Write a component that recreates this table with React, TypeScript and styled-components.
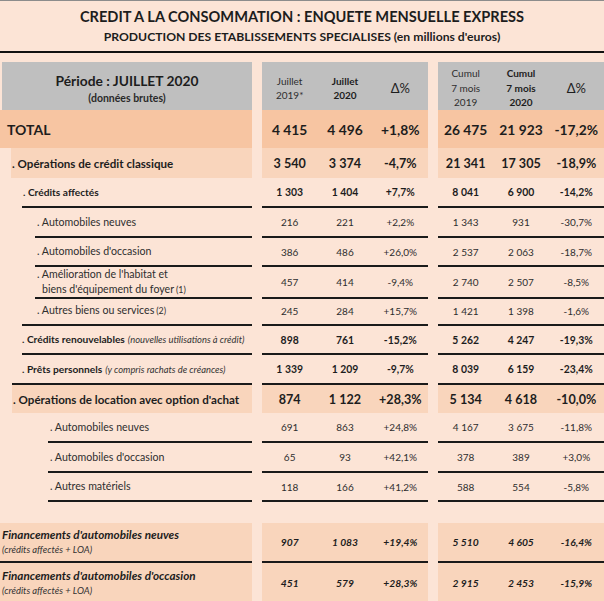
import React from "react";
import styled, { createGlobalStyle } from "styled-components";

const C = {
  bg: "#FCE4D6",
  gray: "#BFBFBF",
  total: "#F7C5A2",
  band: "#F9D5BC",
  ink: "#1d1d1d",
  soft: "#2e2e2e",
  rule: "#1a1a1a",
};

const GlobalStyle = createGlobalStyle`
  *, *::before, *::after { box-sizing: border-box; }
  html, body { margin: 0; padding: 0; background: ${C.bg}; }
  body { font-family: Lato, "Open Sans", "Liberation Sans", sans-serif; color: ${C.ink}; }
`;

type Kind = "total" | "major" | "sub" | "item" | "fin";

const labelSize: Record<Kind, number> = { total: 14, major: 11.6, sub: 10.2, item: 10.6, fin: 11.7 };
const valSize: Record<Kind, number> = { total: 13.8, major: 12.6, sub: 10.4, item: 10, fin: 10.3 };

const Page = styled.div`
  width: 604px;
  height: 601px;
  overflow: hidden;
  background: ${C.bg};
`;

const TitleBlock = styled.header`
  height: 53px;
  border-top: 1px solid #8c8c8c;
  border-bottom: 2px solid #111;
  display: flex;
  flex-direction: column;
  align-items: center;
  justify-content: center;
  gap: 2px;
  margin-bottom: 9px;
`;

const Title = styled.h1`
  margin: 0;
  font-size: 14.6px;
  line-height: 20px;
  font-weight: 700;
  color: ${C.ink};
`;

const Subtitle = styled.h2`
  margin: 0;
  font-size: 12.2px;
  line-height: 16px;
  font-weight: 700;
  color: ${C.ink};
`;

const Row = styled.div<{ $h: number }>`
  display: grid;
  grid-template-columns: 252px 166px 166px;
  column-gap: 10px;
  height: ${(p) => p.$h}px;
`;

const LabelCell = styled.div<{ $indent: number; $pad: number; $bg?: string; $top?: boolean; $bottom?: boolean }>`
  margin-left: ${(p) => p.$indent}px;
  padding-left: ${(p) => p.$pad}px;
  background: ${(p) => p.$bg ?? "transparent"};
  border-top: ${(p) => (p.$top ? `2px solid ${C.rule}` : "none")};
  border-bottom: ${(p) => (p.$bottom ? `2px solid ${C.rule}` : "none")};
  display: flex;
  flex-direction: column;
  justify-content: center;
  min-width: 0;
`;

const Group = styled.div<{ $bg?: string; $top?: boolean; $bottom?: boolean }>`
  display: grid;
  grid-template-columns: repeat(3, 1fr);
  align-items: center;
  justify-items: center;
  background: ${(p) => p.$bg ?? "transparent"};
  border-top: ${(p) => (p.$top ? `2px solid ${C.rule}` : "none")};
  border-bottom: ${(p) => (p.$bottom ? `2px solid ${C.rule}` : "none")};
`;

const Label = styled.div<{ $kind: Kind }>`
  font-size: ${(p) => labelSize[p.$kind]}px;
  font-weight: ${(p) => (p.$kind === "item" ? 400 : 700)};
  font-style: ${(p) => (p.$kind === "fin" ? "italic" : "normal")};
  color: ${(p) => (p.$kind === "item" ? C.soft : C.ink)};
  line-height: 15px;
  white-space: nowrap;
`;

const Continuation = styled.div`
  padding-left: 5px;
`;

const Note = styled.span`
  font-size: 9.4px;
  font-weight: 400;
  font-style: italic;
  color: #333;
  margin-left: 3px;
`;

const Small = styled.span`
  font-size: 8.8px;
  margin-left: 2px;
`;

const FinNote = styled.div`
  font-size: 9.4px;
  font-weight: 400;
  font-style: italic;
  color: #333;
  line-height: 15px;
`;

const Val = styled.span<{ $kind: Kind }>`
  font-size: ${(p) => valSize[p.$kind]}px;
  font-weight: ${(p) => (p.$kind === "item" ? 400 : 700)};
  font-style: ${(p) => (p.$kind === "fin" ? "italic" : "normal")};
  color: ${(p) => (p.$kind === "item" ? C.soft : C.ink)};
  white-space: nowrap;
`;

/* header */
const HeadLeft = styled.div`
  margin-left: 2px;
  background: ${C.gray};
  display: flex;
  flex-direction: column;
  align-items: center;
  justify-content: center;
  padding-top: 6px;
`;

const Periode = styled.div`
  font-size: 13.8px;
  font-weight: 700;
  line-height: 18px;
`;

const Brutes = styled.div`
  font-size: 10.5px;
  font-weight: 700;
  line-height: 16px;
  color: #2a2a2a;
`;

const HeadGroup = styled.div`
  background: ${C.gray};
  display: grid;
  grid-template-columns: repeat(3, 1fr);
  align-items: center;
  justify-items: center;
  padding-top: 4px;
`;

const HeadCol = styled.div<{ $bold?: boolean }>`
  text-align: center;
  font-size: 10px;
  line-height: 14.5px;
  font-weight: ${(p) => (p.$bold ? 700 : 400)};
  color: ${(p) => (p.$bold ? C.ink : C.soft)};
`;

const Delta = styled.div`
  font-size: 13px;
  color: ${C.ink};
`;

const Spacer = styled.div`
  height: 21px;
`;

interface RowDef {
  kind: Kind;
  label: React.ReactNode;
  values: string[];
  h: number;
  indent: number;
  pad: number;
  bg?: string;
  top?: boolean;
  bottom?: boolean;
}

const rows: RowDef[] = [
  { kind: "total", label: "TOTAL", values: ["4 415", "4 496", "+1,8%", "26 475", "21 923", "-17,2%"], h: 38, indent: 0, pad: 7, bg: C.total },
  { kind: "major", label: ". Opérations de crédit classique", values: ["3 540", "3 374", "-4,7%", "21 341", "17 305", "-18,9%"], h: 30, indent: 11, pad: 1, bg: C.band },
  { kind: "sub", label: ". Crédits affectés", values: ["1 303", "1 404", "+7,7%", "8 041", "6 900", "-14,2%"], h: 30, indent: 22, pad: 1, bottom: true },
  { kind: "item", label: ". Automobiles neuves", values: ["216", "221", "+2,2%", "1 343", "931", "-30,7%"], h: 30, indent: 35, pad: 2, bottom: true },
  { kind: "item", label: ". Automobiles d'occasion", values: ["386", "486", "+26,0%", "2 537", "2 063", "-18,7%"], h: 29, indent: 35, pad: 2, bottom: true },
  {
    kind: "item",
    label: (
      <>
        <div>. Amélioration de l'habitat et</div>
        <Continuation>
          biens d'équipement du foyer<Small>(1)</Small>
        </Continuation>
      </>
    ),
    values: ["457", "414", "-9,4%", "2 740", "2 507", "-8,5%"],
    h: 30,
    indent: 35,
    pad: 2,
    bottom: true,
  },
  {
    kind: "item",
    label: (
      <>
        . Autres biens ou services<Small>(2)</Small>
      </>
    ),
    values: ["245", "284", "+15,7%", "1 421", "1 398", "-1,6%"],
    h: 27,
    indent: 35,
    pad: 2,
  },
  {
    kind: "sub",
    label: (
      <>
        . Crédits renouvelables<Note>(nouvelles utilisations à crédit)</Note>
      </>
    ),
    values: ["898", "761", "-15,2%", "5 262", "4 247", "-19,3%"],
    h: 31,
    indent: 22,
    pad: 0,
    top: true,
    bottom: true,
  },
  {
    kind: "sub",
    label: (
      <>
        . Prêts personnels<Note>(y compris rachats de créances)</Note>
      </>
    ),
    values: ["1 339", "1 209", "-9,7%", "8 039", "6 159", "-23,4%"],
    h: 28,
    indent: 22,
    pad: 0,
  },
  { kind: "major", label: ". Opérations de location avec option d'achat", values: ["874", "1 122", "+28,3%", "5 134", "4 618", "-10,0%"], h: 30, indent: 12, pad: 1, bg: C.band, top: true },
  { kind: "item", label: ". Automobiles neuves", values: ["691", "863", "+24,8%", "4 167", "3 675", "-11,8%"], h: 30, indent: 48, pad: 2, bottom: true },
  { kind: "item", label: ". Automobiles d'occasion", values: ["65", "93", "+42,1%", "378", "389", "+3,0%"], h: 30, indent: 48, pad: 2, bottom: true },
  { kind: "item", label: ". Autres matériels", values: ["118", "166", "+41,2%", "588", "554", "-5,8%"], h: 29, indent: 48, pad: 2, bottom: true },
];

const finRows: RowDef[] = [
  {
    kind: "fin",
    label: (
      <>
        <div>Financements d'automobiles neuves</div>
        <FinNote>(crédits affectés + LOA)</FinNote>
      </>
    ),
    values: ["907", "1 083", "+19,4%", "5 510", "4 605", "-16,4%"],
    h: 40,
    indent: 0,
    pad: 2,
    bg: C.band,
    bottom: true,
  },
  {
    kind: "fin",
    label: (
      <>
        <div>Financements d'automobiles d'occasion</div>
        <FinNote>(crédits affectés + LOA)</FinNote>
      </>
    ),
    values: ["451", "579", "+28,3%", "2 915", "2 453", "-15,9%"],
    h: 40,
    indent: 0,
    pad: 2,
    bg: C.band,
  },
];

function DataRow({ r }: { r: RowDef }) {
  return (
    <Row $h={r.h}>
      <LabelCell $indent={r.indent} $pad={r.pad} $bg={r.bg} $top={r.top} $bottom={r.bottom}>
        <Label $kind={r.kind}>{r.label}</Label>
      </LabelCell>
      <Group $bg={r.bg} $top={r.top} $bottom={r.bottom}>
        {r.values.slice(0, 3).map((v, i) => (
          <Val key={i} $kind={r.kind}>
            {v}
          </Val>
        ))}
      </Group>
      <Group $bg={r.bg} $top={r.top} $bottom={r.bottom}>
        {r.values.slice(3).map((v, i) => (
          <Val key={i} $kind={r.kind}>
            {v}
          </Val>
        ))}
      </Group>
    </Row>
  );
}

export default function App() {
  return (
    <Page>
      <GlobalStyle />
      <TitleBlock>
        <Title>CREDIT A LA CONSOMMATION : ENQUETE MENSUELLE EXPRESS</Title>
        <Subtitle>PRODUCTION DES ETABLISSEMENTS SPECIALISES (en millions d'euros)</Subtitle>
      </TitleBlock>

      <Row $h={48}>
        <HeadLeft>
          <Periode>Période : JUILLET 2020</Periode>
          <Brutes>(données brutes)</Brutes>
        </HeadLeft>
        <HeadGroup>
          <HeadCol>
            Juillet
            <br />
            2019*
          </HeadCol>
          <HeadCol $bold>
            Juillet
            <br />
            2020
          </HeadCol>
          <Delta>Δ%</Delta>
        </HeadGroup>
        <HeadGroup>
          <HeadCol>
            Cumul
            <br />7 mois
            <br />
            2019
          </HeadCol>
          <HeadCol $bold>
            Cumul
            <br />7 mois
            <br />
            2020
          </HeadCol>
          <Delta>Δ%</Delta>
        </HeadGroup>
      </Row>

      {rows.map((r, i) => (
        <DataRow key={i} r={r} />
      ))}
      <Spacer />
      {finRows.map((r, i) => (
        <DataRow key={i} r={r} />
      ))}
    </Page>
  );
}
